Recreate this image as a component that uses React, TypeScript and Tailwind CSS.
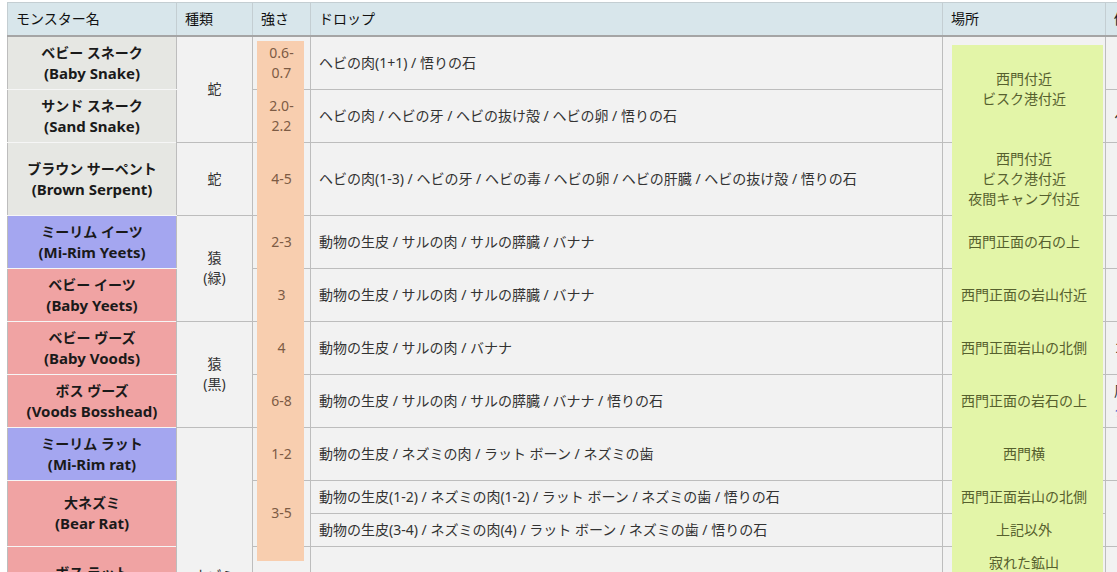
import React from "react"

type Tone = "gray" | "blue" | "pink"

const toneBg: Record<Tone, string> = {
  gray: "bg-[#e6e7e3]",
  blue: "bg-[#a4a6f0]",
  pink: "bg-[#f0a3a3]",
}

const cell = "border border-[#bdbdbd] px-2 py-[6px] text-[14px] leading-[20px] align-middle"
const td = `${cell} bg-[#f2f2f2] text-[#333]`
const th = "border border-[#c4ced2] border-b-2 border-b-[#a5a5a5] bg-[#d8e6eb] px-2 h-[33px] text-left font-normal text-[14px] text-[#111]"

function Name({ jp, en, tone, rowSpan }: { jp: string; en: string; tone: Tone; rowSpan?: number }) {
  return (
    <td rowSpan={rowSpan} className={`${cell} ${toneBg[tone]} border-b-[#f6f6f6] text-center font-bold text-[#1a1a1a]`}>
      <div className="h-[20px]">{jp}</div>
      <div className="h-[20px] text-[15px] leading-[20px]">{en}</div>
    </td>
  )
}

function Str({ children, rowSpan }: { children: React.ReactNode; rowSpan?: number }) {
  return (
    <td rowSpan={rowSpan} className={`${td} text-center`}>
      <span className="relative z-20 text-[#7d5b44]">{children}</span>
    </td>
  )
}

function Loc({ lines, rowSpan }: { lines: string[]; rowSpan?: number }) {
  return (
    <td rowSpan={rowSpan} className={`${td} text-center`}>
      <span className="relative z-20 text-[#56602e]">
        {lines.map((l, i) => (
          <React.Fragment key={i}>
            {i > 0 && <br />}
            {l}
          </React.Fragment>
        ))}
      </span>
    </td>
  )
}

export default function App() {
  return (
    <div className="relative h-screen w-full overflow-hidden bg-white pl-[7px] pt-[2px] font-['Noto_Sans','Noto_Sans_CJK_JP',sans-serif]">
      {/* highlight marks over the strength and place columns */}
      <div className="absolute left-[257px] top-[41px] z-10 h-[520px] w-[47px] bg-[#f8ceaf]" />
      <div className="absolute left-[952px] top-[45px] z-10 h-[560px] w-[151px] bg-[#e3f5a8]" />

      <table className="table-fixed border-collapse w-[1290px]">
        <colgroup>
          <col className="w-[169px]" />
          <col className="w-[76px]" />
          <col className="w-[58px]" />
          <col className="w-[632px]" />
          <col className="w-[163px]" />
          <col className="w-[192px]" />
        </colgroup>
        <thead>
          <tr>
            <th className={th}>モンスター名</th>
            <th className={th}>種類</th>
            <th className={th}>強さ</th>
            <th className={th}>ドロップ</th>
            <th className={th}>場所</th>
            <th className={th}>備考</th>
          </tr>
        </thead>
        <tbody>
          <tr>
            <Name jp="ベビー スネーク" en="(Baby Snake)" tone="gray" />
            <td rowSpan={2} className={`${td} text-center`}>蛇</td>
            <Str>0.6-<br />0.7</Str>
            <td className={td}>ヘビの肉(1+1) / 悟りの石</td>
            <Loc rowSpan={2} lines={["西門付近", "ビスク港付近"]} />
            <td className={td}></td>
          </tr>
          <tr>
            <Name jp="サンド スネーク" en="(Sand Snake)" tone="gray" />
            <Str>2.0-<br />2.2</Str>
            <td className={td}>ヘビの肉 / ヘビの牙 / ヘビの抜け殻 / ヘビの卵 / 悟りの石</td>
            <td className={td}>ヘビの卵は低確率</td>
          </tr>
          <tr>
            <Name jp="ブラウン サーペント" en="(Brown Serpent)" tone="gray" />
            <td className={`${td} text-center`}>蛇</td>
            <Str>4-5</Str>
            <td className={td}>ヘビの肉(1-3) / ヘビの牙 / ヘビの毒 / ヘビの卵 / ヘビの肝臓 / ヘビの抜け殻 / 悟りの石</td>
            <Loc lines={["西門付近", "ビスク港付近", "夜間キャンプ付近"]} />
            <td className={td}></td>
          </tr>
          <tr>
            <Name jp="ミーリム イーツ" en="(Mi-Rim Yeets)" tone="blue" />
            <td rowSpan={2} className={`${td} text-center`}>猿<br />(緑)</td>
            <Str>2-3</Str>
            <td className={td}>動物の生皮 / サルの肉 / サルの膵臓 / バナナ</td>
            <Loc lines={["西門正面の石の上"]} />
            <td className={td}></td>
          </tr>
          <tr>
            <Name jp="ベビー イーツ" en="(Baby Yeets)" tone="pink" />
            <Str>3</Str>
            <td className={td}>動物の生皮 / サルの肉 / サルの膵臓 / バナナ</td>
            <Loc lines={["西門正面の岩山付近"]} />
            <td className={td}></td>
          </tr>
          <tr>
            <Name jp="ベビー ヴーズ" en="(Baby Voods)" tone="pink" />
            <td rowSpan={2} className={`${td} text-center`}>猿<br />(黒)</td>
            <Str>4</Str>
            <td className={td}>動物の生皮 / サルの肉 / バナナ</td>
            <Loc lines={["西門正面岩山の北側"]} />
            <td className={td}>コロニーを作る</td>
          </tr>
          <tr>
            <Name jp="ボス ヴーズ" en="(Voods Bosshead)" tone="pink" />
            <Str>6-8</Str>
            <td className={td}>動物の生皮 / サルの肉 / サルの膵臓 / バナナ / 悟りの石</td>
            <Loc lines={["西門正面の岩石の上"]} />
            <td className={td}>
              周囲に子分がいる
              <br />
              <span className="text-[#2156c9]">クエスト対象</span>
            </td>
          </tr>
          <tr>
            <Name jp="ミーリム ラット" en="(Mi-Rim rat)" tone="blue" />
            <td rowSpan={6} className={`${td} text-center`}>ネズミ</td>
            <Str>1-2</Str>
            <td className={td}>動物の生皮 / ネズミの肉 / ラット ボーン / ネズミの歯</td>
            <Loc lines={["西門横"]} />
            <td className={td}></td>
          </tr>
          <tr>
            <Name jp="大ネズミ" en="(Bear Rat)" tone="pink" rowSpan={2} />
            <Str rowSpan={2}>3-5</Str>
            <td className={td}>動物の生皮(1-2) / ネズミの肉(1-2) / ラット ボーン / ネズミの歯 / 悟りの石</td>
            <Loc lines={["西門正面岩山の北側"]} />
            <td rowSpan={2} className={td}></td>
          </tr>
          <tr>
            <td className={td}>動物の生皮(3-4) / ネズミの肉(4) / ラット ボーン / ネズミの歯 / 悟りの石</td>
            <Loc lines={["上記以外"]} />
          </tr>
          <tr>
            <Name jp="ボス ラット" en="(Boss Rat)" tone="pink" />
            <Str>6-7</Str>
            <td className={td}>動物の生皮 / ネズミの肉 / ラット ボーン / ネズミの歯 / 悟りの石</td>
            <Loc lines={["寂れた鉱山", "入口付近", "坑道の奥"]} />
            <td className={td}>多数で出現</td>
          </tr>
          <tr>
            <Name jp="ミーリム ボーン" en="(Mi-Rim Bone)" tone="blue" />
            <Str>8</Str>
            <td className={td}>動物の生皮 / ラット ボーン / 悟りの石</td>
            <Loc lines={["寂れた鉱山", "奥地"]} />
            <td className={td}></td>
          </tr>
          <tr>
            <Name jp="ジャイアント ラット" en="(Giant Rat)" tone="pink" />
            <Str>9</Str>
            <td className={td}>動物の生皮 / ネズミの肉 / 悟りの石</td>
            <Loc lines={["寂れた鉱山", "最深部"]} />
            <td className={td}></td>
          </tr>
        </tbody>
      </table>
    </div>
  )
}
